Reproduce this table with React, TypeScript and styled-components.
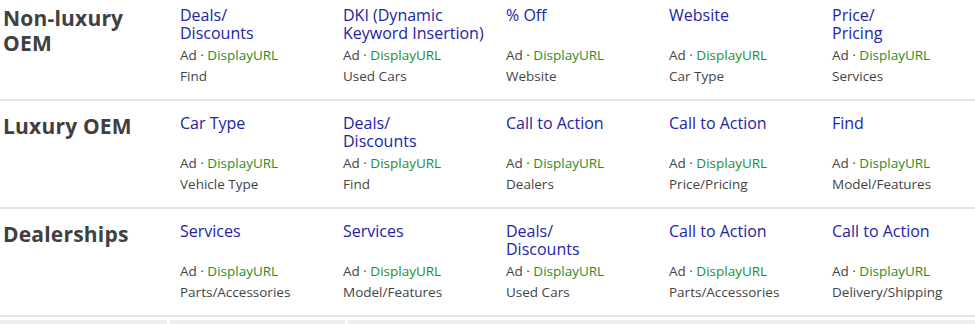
import React from "react";
import styled, { createGlobalStyle } from "styled-components";

const GlobalStyle = createGlobalStyle`
  html, body {
    margin: 0;
    padding: 0;
    background: #ffffff;
    overflow: hidden;
  }
  body {
    font-family: "Open Sans", "Noto Sans", sans-serif;
  }
`;

const Page = styled.div`
  width: 975px;
  margin-top: -7px;
`;

const Row = styled.div`
  display: grid;
  grid-template-columns: 177px repeat(5, 163px);
  padding: 13px 0 12px 3px;
  border-bottom: 2px solid #e4e4e4;
  white-space: nowrap;
`;

const Header = styled.div`
  font-size: 21px;
  line-height: 25px;
  font-weight: 700;
  letter-spacing: 0.2px;
  color: #404040;
  white-space: pre-line;
`;

const Ad = styled.div`
  display: flex;
  flex-direction: column;
`;

const Title = styled.div`
  font-size: 16px;
  line-height: 18px;
  color: #2323a5;
  min-height: 36px;
  white-space: pre-line;
`;

const Meta = styled.div`
  margin-top: 3px;
  font-size: 13.5px;
  line-height: 21px;
  color: #444444;
`;

const Url = styled.span`
  color: #1f8c2a;
`;

const Desc = styled.div`
  font-size: 13.5px;
  line-height: 21px;
  color: #444444;
`;

const Strip = styled.div`
  display: flex;
  gap: 3px;
  margin-top: 3px;
`;

const StripBlock = styled.div<{ $w: number }>`
  width: ${(p) => p.$w}px;
  height: 8px;
  background: #efefef;
  flex: 0 0 auto;
`;

type Item = { title: string; desc: string };

const rows: { header: string; items: Item[] }[] = [
  {
    header: "Non-luxury\nOEM",
    items: [
      { title: "Deals/\nDiscounts", desc: "Find" },
      { title: "DKI (Dynamic\nKeyword Insertion)", desc: "Used Cars" },
      { title: "% Off", desc: "Website" },
      { title: "Website", desc: "Car Type" },
      { title: "Price/\nPricing", desc: "Services" },
    ],
  },
  {
    header: "Luxury OEM",
    items: [
      { title: "Car Type", desc: "Vehicle Type" },
      { title: "Deals/\nDiscounts", desc: "Find" },
      { title: "Call to Action", desc: "Dealers" },
      { title: "Call to Action", desc: "Price/Pricing" },
      { title: "Find", desc: "Model/Features" },
    ],
  },
  {
    header: "Dealerships",
    items: [
      { title: "Services", desc: "Parts/Accessories" },
      { title: "Services", desc: "Model/Features" },
      { title: "Deals/\nDiscounts", desc: "Used Cars" },
      { title: "Call to Action", desc: "Parts/Accessories" },
      { title: "Call to Action", desc: "Delivery/Shipping" },
    ],
  },
];

export default function App() {
  return (
    <>
      <GlobalStyle />
      <Page>
        {rows.map((r) => (
          <Row key={r.header}>
            <Header>{r.header}</Header>
            {r.items.map((it, i) => (
              <Ad key={i}>
                <Title>{it.title}</Title>
                <Meta>
                  Ad · <Url>DisplayURL</Url>
                </Meta>
                <Desc>{it.desc}</Desc>
              </Ad>
            ))}
          </Row>
        ))}
        <Strip>
          <StripBlock $w={167} />
          <StripBlock $w={175} />
          <StripBlock $w={628} />
        </Strip>
      </Page>
    </>
  );
}
